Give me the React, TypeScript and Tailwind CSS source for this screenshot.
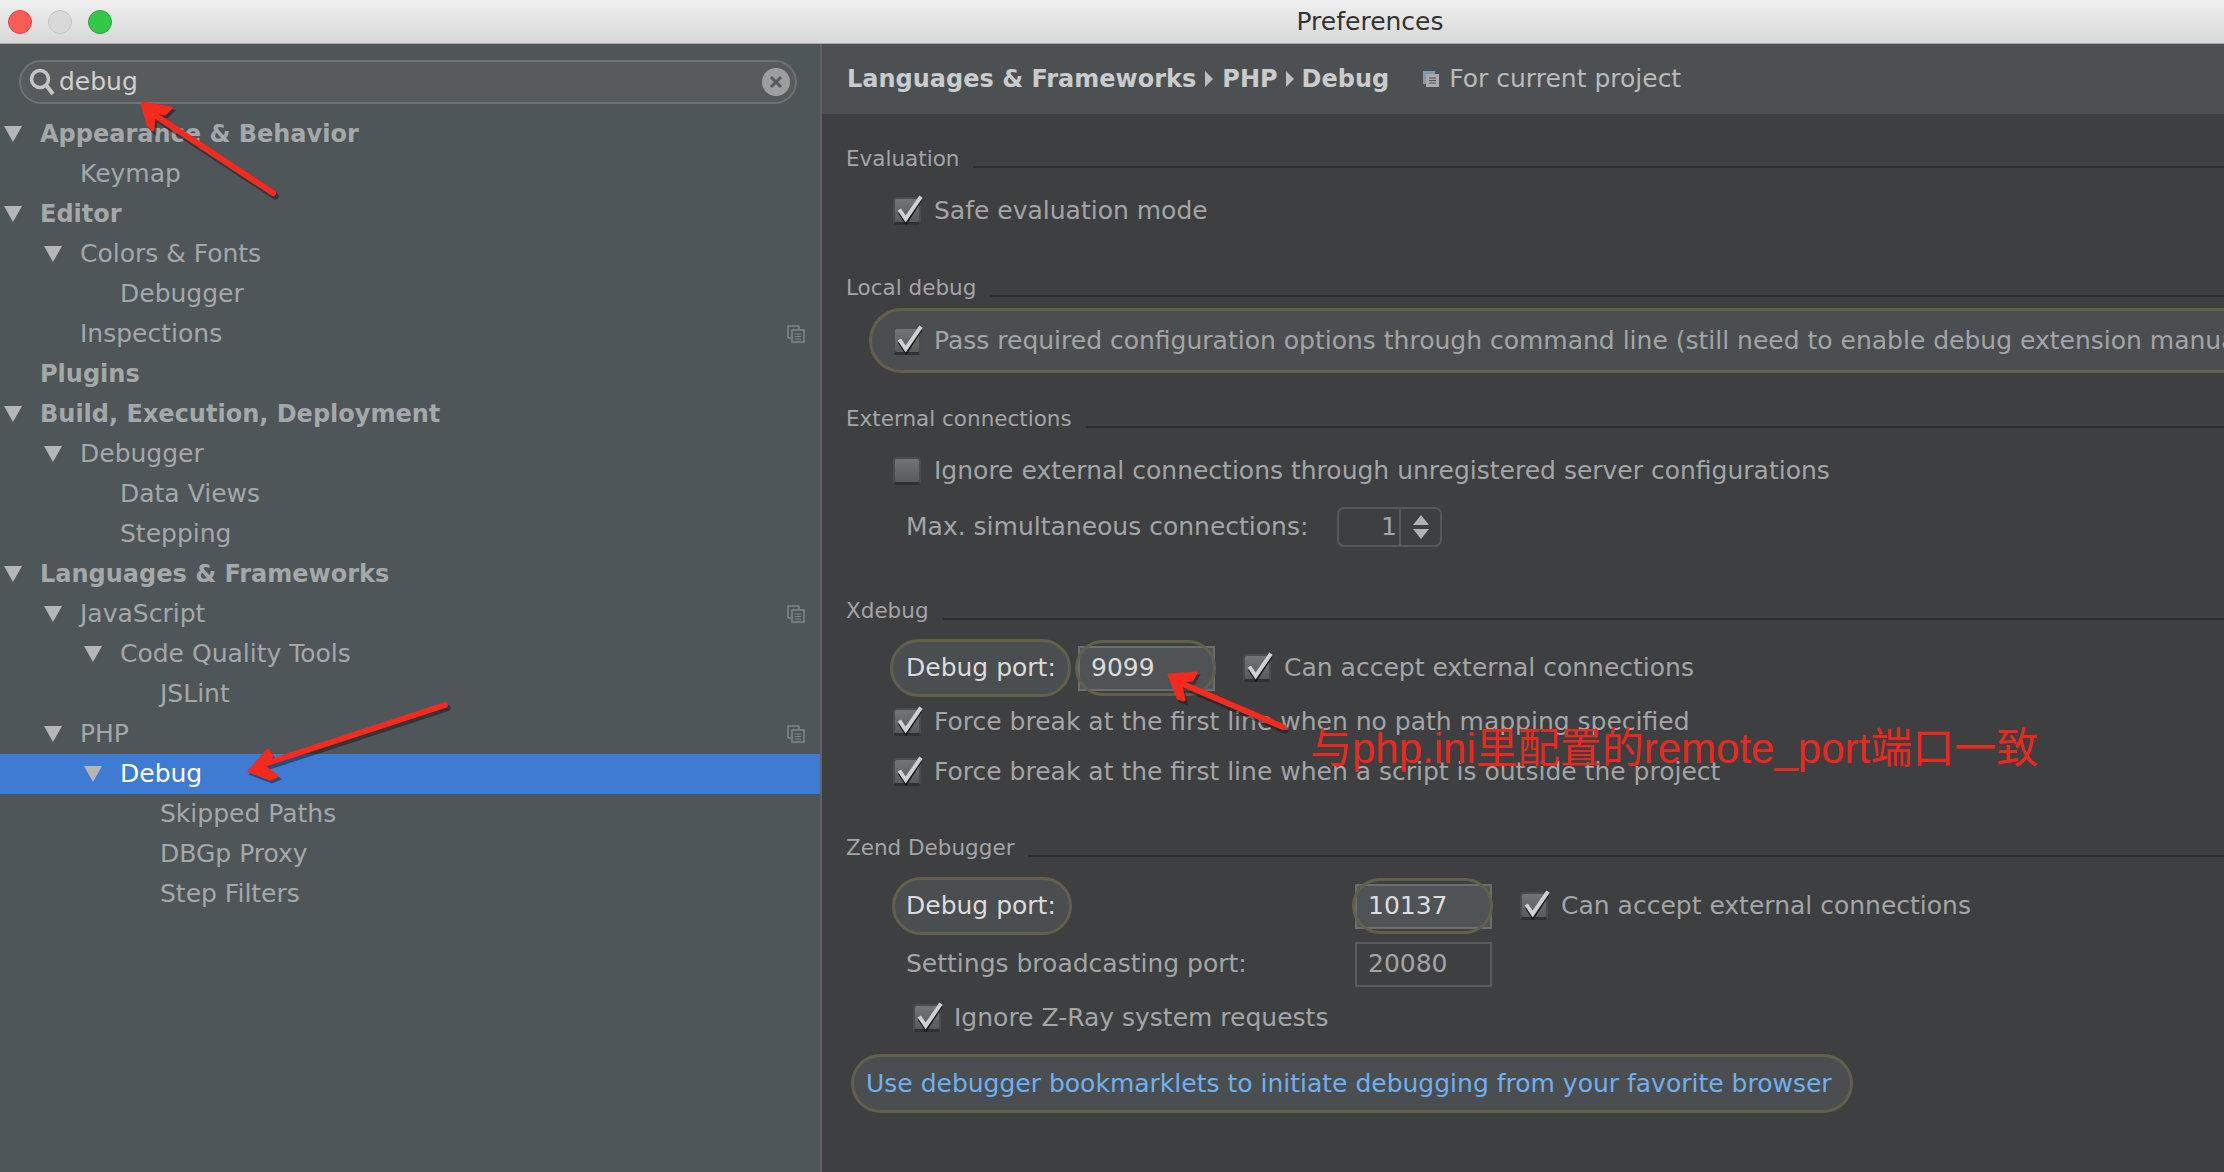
import type { ReactNode } from "react";

const FONT = "font-['DejaVu_Sans','Noto_Sans_CJK_SC',sans-serif]";

type TreeItem = {
  label: string;
  level: number;
  open?: boolean;
  bold?: boolean;
  copy?: boolean;
  selected?: boolean;
};

const TREE: TreeItem[] = [
  { label: "Appearance & Behavior", level: 0, open: true, bold: true },
  { label: "Keymap", level: 1 },
  { label: "Editor", level: 0, open: true, bold: true },
  { label: "Colors & Fonts", level: 1, open: true },
  { label: "Debugger", level: 2 },
  { label: "Inspections", level: 1, copy: true },
  { label: "Plugins", level: 0, bold: true },
  { label: "Build, Execution, Deployment", level: 0, open: true, bold: true },
  { label: "Debugger", level: 1, open: true },
  { label: "Data Views", level: 2 },
  { label: "Stepping", level: 2 },
  { label: "Languages & Frameworks", level: 0, open: true, bold: true },
  { label: "JavaScript", level: 1, open: true, copy: true },
  { label: "Code Quality Tools", level: 2, open: true },
  { label: "JSLint", level: 3 },
  { label: "PHP", level: 1, open: true, copy: true },
  { label: "Debug", level: 2, open: true, selected: true },
  { label: "Skipped Paths", level: 3 },
  { label: "DBGp Proxy", level: 3 },
  { label: "Step Filters", level: 3 },
];

const INDENT = ["pl-[40px]", "pl-[80px]", "pl-[120px]", "pl-[160px]"];
const ARROW_LEFT = ["left-[4px]", "left-[44px]", "left-[84px]", "left-[124px]"];

function CopyIcon() {
  return (
    <svg width="19" height="19" viewBox="0 0 19 19" fill="none" className="text-[#7f8487]">
      <path d="M2 14V2h11" stroke="currentColor" strokeWidth="1.600" />
      <path d="M2 14h3M13 2v3" stroke="currentColor" strokeWidth="1.600" />
      <rect x="6" y="6" width="12" height="12" stroke="currentColor" strokeWidth="1.600" />
      <path d="M9 10h6M9 12.500h6M9 15h6" stroke="currentColor" strokeWidth="1.200" />
    </svg>
  );
}

function TreeRow({ item }: { item: TreeItem }) {
  return (
    <div
      className={`relative h-[40px] flex items-center ${INDENT[item.level]} ${
        item.selected ? "bg-[#3f7bd2] text-white" : "text-[#a5a8a9]"
      } ${item.bold ? "font-bold text-[24px]" : "text-[25px]"}`}
    >
      {item.open && (
        <span
          className={`absolute top-[12px] ${ARROW_LEFT[item.level]} w-0 h-0 border-x-[9px] border-x-transparent border-t-[16px] border-t-[#b4b6b7]`}
        />
      )}
      <span>{item.label}</span>
      {item.copy && (
        <span className="absolute right-[15px] top-[10px] flex">
          <CopyIcon />
        </span>
      )}
    </div>
  );
}

function Section({ title, children }: { title: string; children: ReactNode }) {
  return (
    <section className="flex flex-col">
      <div className="flex items-center gap-[14px] h-[30px]">
        <span className="text-[21.500px] text-[#a3a5a6]">{title}</span>
        <div className="flex-1 h-[2px] mt-[16px] bg-[#2c2e2f]" />
      </div>
      {children}
    </section>
  );
}

function Checkbox({ checked = true }: { checked?: boolean }) {
  return (
    <span className="relative shrink-0 w-[28px] h-[28px] rounded-[4px] border-2 border-[#4a4c4e] border-b-[3px] border-b-[#2e3031] bg-gradient-to-b from-[#727476] to-[#585a5c]">
      {checked && (
        <svg width="34" height="38" viewBox="0 0 34 38" className="absolute left-[-2px] top-[-12px]">
          <path d="M6.500 25l6.500 10L28 12" fill="none" stroke="#141516" strokeWidth="3.500" />
          <path d="M6.300 22.500l6.400 9.500L28 9.700" fill="none" stroke="#cfd0d1" strokeWidth="4" />
        </svg>
      )}
    </span>
  );
}

function CheckRow({ label, checked, className = "" }: { label: string; checked?: boolean; className?: string }) {
  return (
    <div className={`flex items-center gap-[13px] text-[25px] text-[#a3a5a6] ${className}`}>
      <Checkbox checked={checked} />
      <span className="whitespace-nowrap">{label}</span>
    </div>
  );
}

function Pill({ children, className = "" }: { children: ReactNode; className?: string }) {
  return (
    <div className={`flex items-center rounded-full border-[3px] border-[#62604c] bg-[#4b4e51] ${className}`}>
      {children}
    </div>
  );
}

function TextField({ value, highlight }: { value: string; highlight?: boolean }) {
  return (
    <div
      className={`relative flex items-center w-[137px] h-[45px] pl-[11px] border-2 text-[25px] ${
        highlight
          ? "border-[#6b6e6c] bg-[#505356] text-[#dcdcdc]"
          : "border-[#5a5d5f] text-[#a3a5a6]"
      }`}
    >
      {value}
      {highlight && (
        <span className="absolute left-[-5px] right-[-3px] top-[-8px] bottom-[-7px] rounded-full border-[3px] border-[#62604c]" />
      )}
    </div>
  );
}

function Arrows() {
  const paths = [
    {
      tail: "M273 193L150 112",
      head: "M142 103L171 108L165 114L154 112L153 130L148 125Z",
    },
    {
      tail: "M445 705L258 766",
      head: "M249 771L268 750L272 756L263 766L277 776L270 779Z",
    },
    {
      tail: "M1283 727L1178 682",
      head: "M1169 675L1196 673L1192 680L1180 681L1184 700L1178 698Z",
    },
  ];
  return (
    <svg width="2224" height="1172" viewBox="0 0 2224 1172" className="absolute inset-0 pointer-events-none">
      {paths.map((p) => (
        <g key={p.tail}>
          <g transform="translate(2 3)" opacity="0.45">
            <path d={p.tail} stroke="#111" strokeWidth="7" strokeLinecap="round" fill="none" />
            <path d={p.head} fill="#111" stroke="#111" strokeWidth="3" />
          </g>
          <path d={p.tail} stroke="#f52a1e" strokeWidth="6" strokeLinecap="round" fill="none" />
          <path d={p.head} fill="#f52a1e" stroke="#f52a1e" strokeWidth="3" strokeLinejoin="round" />
        </g>
      ))}
    </svg>
  );
}

export default function App() {
  return (
    <div className={`relative w-[2224px] h-[1172px] overflow-hidden flex flex-col bg-[#3d3f41] ${FONT}`}>
      <header className="relative flex items-center justify-center pl-[516px] h-[44px] shrink-0 bg-gradient-to-b from-[#f0f0f0] to-[#d8d8d8] border-b border-[#a8a8a8]">
        <div className="absolute left-[8px] top-[10px] flex gap-[16px]">
          <span className="w-[24px] h-[24px] rounded-full bg-[#fc5b57] border border-[#e0443e]" />
          <span className="w-[24px] h-[24px] rounded-full bg-[#d9d9d9] border border-[#c4c4c4]" />
          <span className="w-[24px] h-[24px] rounded-full bg-[#35c748] border border-[#2aa63a]" />
        </div>
        <span className="text-[25px] text-[#333333]">Preferences</span>
      </header>

      <div className="flex flex-1 min-h-0">
        <aside className="w-[822px] shrink-0 bg-[#4e565a] border-r-2 border-[#5f6365] flex flex-col">
          <div className="h-[70px] flex items-start pt-[16px] pl-[19px] pr-[23px] shrink-0">
            <div className="flex-1 h-[44px] rounded-full bg-[#585b5c] border-2 border-[#6e7274] flex items-center pl-[7px] pr-[5px] text-[#d0d0d0]">
              <svg width="28" height="28" viewBox="0 0 28 28" fill="none" className="shrink-0">
                <circle cx="12" cy="11" r="8.500" stroke="#c4c6c6" strokeWidth="3.500" />
                <path d="M18 17l7 9" stroke="#c4c6c6" strokeWidth="4" />
              </svg>
              <span className="ml-[3px] text-[25px]">debug</span>
              <span className="ml-auto w-[28px] h-[28px] rounded-full bg-[#9c9d9e] flex items-center justify-center">
                <svg width="14" height="14" viewBox="0 0 14 14">
                  <path d="M2 2l10 10M12 2L2 12" stroke="#57595b" strokeWidth="3" />
                </svg>
              </span>
            </div>
          </div>
          {TREE.map((item, i) => (
            <TreeRow key={i} item={item} />
          ))}
        </aside>

        <main className="flex-1 min-w-0 flex flex-col">
          <div className="h-[70px] shrink-0 bg-[#4c5052] flex items-center pl-[25px] text-[24px] text-[#c9cbcc] whitespace-nowrap">
            <span className="font-bold">Languages &amp; Frameworks</span>
            <span className="mx-[9px] w-0 h-0 border-y-[8px] border-y-transparent border-l-[8px] border-l-[#bcbebf]" />
            <span className="font-bold">PHP</span>
            <span className="mx-[8px] w-0 h-0 border-y-[8px] border-y-transparent border-l-[8px] border-l-[#bcbebf]" />
            <span className="font-bold">Debug</span>
            <span className="ml-[33px] mr-[9px] flex">
              <svg width="18" height="18" viewBox="0 0 18 18">
                <rect x="1" y="1" width="12" height="13" fill="#7f9bb3" />
                <rect x="4" y="4" width="13" height="13" fill="#a8a9aa" />
                <path d="M7 8h7M7 10.500h7M7 13h7" stroke="#4c5052" strokeWidth="1.200" />
              </svg>
            </span>
            <span className="text-[25px] text-[#b9bbbc]">For current project</span>
          </div>

          <div className="flex flex-col pl-[24px] pt-[30px]">
            <Section title="Evaluation">
              <CheckRow label="Safe evaluation mode" className="pl-[47px] mt-[22px] h-[30px]" />
            </Section>

            <div className="mt-[47px]">
              <Section title="Local debug">
                <Pill className="ml-[23px] mt-[5px] h-[65px] w-[1400px] pl-[21px] rounded-r-none border-r-0 overflow-hidden">
                  <CheckRow label="Pass required configuration options through command line (still need to enable debug extension manually)" />
                </Pill>
              </Section>
            </div>

            <div className="mt-[31px]">
              <Section title="External connections">
                <CheckRow
                  label="Ignore external connections through unregistered server configurations"
                  checked={false}
                  className="pl-[47px] mt-[22px] h-[30px]"
                />
                <div className="flex items-center ml-[60px] mt-[21px] h-[40px] text-[25px] text-[#a3a5a6]">
                  <span className="w-[431px] whitespace-nowrap">Max. simultaneous connections:</span>
                  <div className="flex w-[105px] h-[40px] rounded-[7px] border-2 border-[#56595b]">
                    <span className="w-[62px] text-right pr-[2px] leading-[36px] border-r-2 border-[#56595b]">1</span>
                    <span className="flex-1 flex flex-col items-center justify-center gap-[4px]">
                      <span className="w-0 h-0 border-x-[8px] border-x-transparent border-b-[10px] border-b-[#b0b2b3]" />
                      <span className="w-0 h-0 border-x-[8px] border-x-transparent border-t-[10px] border-t-[#b0b2b3]" />
                    </span>
                  </div>
                </div>
              </Section>
            </div>

            <div className="mt-[49px]">
              <Section title="Xdebug">
                <div className="flex items-center mt-[13px] ml-[44px] h-[58px]">
                  <Pill className="w-[181px] h-[58px] pl-[13px] text-[25px] text-[#dcdcdc]">Debug port:</Pill>
                  <div className="ml-[7px]">
                    <TextField value="9099" highlight />
                  </div>
                  <CheckRow label="Can accept external connections" className="ml-[28px] gap-[12px]" />
                </div>
                <CheckRow
                  label="Force break at the first line when no path mapping specified"
                  className="pl-[47px] mt-[10px] h-[30px]"
                />
                <CheckRow
                  label="Force break at the first line when a script is outside the project"
                  className="pl-[47px] mt-[20px] h-[30px]"
                />
              </Section>
            </div>

            <div className="mt-[46px]">
              <Section title="Zend Debugger">
                <div className="flex items-center mt-[14px] ml-[46px] h-[58px]">
                  <Pill className="w-[180px] h-[58px] pl-[11px] text-[25px] text-[#dcdcdc]">Debug port:</Pill>
                  <div className="ml-[283px]">
                    <TextField value="10137" highlight />
                  </div>
                  <CheckRow label="Can accept external connections" className="ml-[28px] gap-[12px]" />
                </div>
                <div className="flex items-center mt-[7px] ml-[60px] h-[44px] text-[25px] text-[#a3a5a6]">
                  <span className="w-[449px] whitespace-nowrap">Settings broadcasting port:</span>
                  <TextField value="20080" />
                </div>
                <CheckRow label="Ignore Z-Ray system requests" className="pl-[67px] mt-[17px] h-[30px]" />
                <Pill className="w-[1002px] h-[59px] ml-[5px] mt-[21px] pl-[12px] text-[25px] text-[#6fb0f0] whitespace-nowrap">
                  Use debugger bookmarklets to initiate debugging from your favorite browser
                </Pill>
              </Section>
            </div>
          </div>
        </main>
      </div>

      <span className="absolute left-[1310px] top-[722px] text-[42px] leading-[54px] text-[#e8291f] whitespace-nowrap font-['Liberation_Sans','Noto_Sans_CJK_SC',sans-serif]">
        与php.ini里配置的remote_port端口一致
      </span>
      <Arrows />
    </div>
  );
}
